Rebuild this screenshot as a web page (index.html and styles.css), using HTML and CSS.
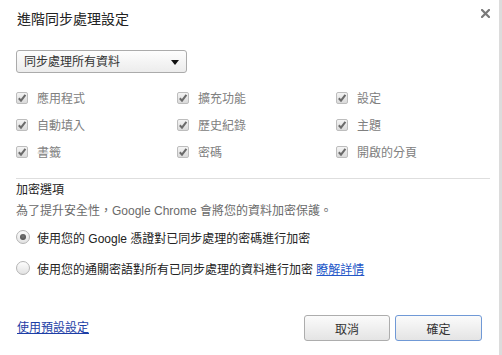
FILE: index.html
```html
<!DOCTYPE html>
<html lang="zh-Hant">
<head>
<meta charset="utf-8">
<title>進階同步處理設定</title>
<link rel="stylesheet" href="styles.css">
</head>
<body>
<div class="dialog">
  <div class="header">
    <div class="title">進階同步處理設定</div>
    <div class="close">
      <svg width="9" height="9" viewBox="0 0 9 9"><path d="M1 1 L8 8 M8 1 L1 8" stroke="#7a7a7a" stroke-width="2.2" stroke-linecap="square"/></svg>
    </div>
  </div>

  <div class="select">
    <span>同步處理所有資料</span>
    <span class="arrow"></span>
  </div>

  <div class="types">
    <div class="item"><span class="check"><svg width="10" height="10" viewBox="0 0 10 10"><path d="M1.8 5.2 L4 7.6 L8.4 1.8" fill="none" stroke="#6b6b6b" stroke-width="2"/></svg></span><span>應用程式</span></div>
    <div class="item"><span class="check"><svg width="10" height="10" viewBox="0 0 10 10"><path d="M1.8 5.2 L4 7.6 L8.4 1.8" fill="none" stroke="#6b6b6b" stroke-width="2"/></svg></span><span>擴充功能</span></div>
    <div class="item"><span class="check"><svg width="10" height="10" viewBox="0 0 10 10"><path d="M1.8 5.2 L4 7.6 L8.4 1.8" fill="none" stroke="#6b6b6b" stroke-width="2"/></svg></span><span>設定</span></div>
    <div class="item"><span class="check"><svg width="10" height="10" viewBox="0 0 10 10"><path d="M1.8 5.2 L4 7.6 L8.4 1.8" fill="none" stroke="#6b6b6b" stroke-width="2"/></svg></span><span>自動填入</span></div>
    <div class="item"><span class="check"><svg width="10" height="10" viewBox="0 0 10 10"><path d="M1.8 5.2 L4 7.6 L8.4 1.8" fill="none" stroke="#6b6b6b" stroke-width="2"/></svg></span><span>歷史紀錄</span></div>
    <div class="item"><span class="check"><svg width="10" height="10" viewBox="0 0 10 10"><path d="M1.8 5.2 L4 7.6 L8.4 1.8" fill="none" stroke="#6b6b6b" stroke-width="2"/></svg></span><span>主題</span></div>
    <div class="item"><span class="check"><svg width="10" height="10" viewBox="0 0 10 10"><path d="M1.8 5.2 L4 7.6 L8.4 1.8" fill="none" stroke="#6b6b6b" stroke-width="2"/></svg></span><span>書籤</span></div>
    <div class="item"><span class="check"><svg width="10" height="10" viewBox="0 0 10 10"><path d="M1.8 5.2 L4 7.6 L8.4 1.8" fill="none" stroke="#6b6b6b" stroke-width="2"/></svg></span><span>密碼</span></div>
    <div class="item"><span class="check"><svg width="10" height="10" viewBox="0 0 10 10"><path d="M1.8 5.2 L4 7.6 L8.4 1.8" fill="none" stroke="#6b6b6b" stroke-width="2"/></svg></span><span>開啟的分頁</span></div>
  </div>

  <div class="sep"></div>

  <div class="section-title">加密選項</div>
  <div class="desc">為了提升安全性，Google Chrome 會將您的資料加密保護。</div>
  <div class="radio-row"><span class="radio on"><span class="dot"></span></span><span>使用您的 Google 憑證對已同步處理的密碼進行加密</span></div>
  <div class="radio-row second"><span class="radio"></span><span>使用您的通關密語對所有已同步處理的資料進行加密 <a class="learn" href="#">瞭解詳情</a></span></div>

  <div class="footer">
    <a class="defaults" href="#">使用預設設定</a>
    <div class="buttons">
      <div class="btn">取消</div>
      <div class="btn primary">確定</div>
    </div>
  </div>
</div>
</body>
</html>
```

FILE: styles.css
```css
html, body {
  margin: 0;
  padding: 0;
  background: #fff;
}
body {
  font-family: "Liberation Sans", "Noto Sans CJK TC", sans-serif;
  font-size: 12px;
  color: #333;
}
.dialog {
  box-sizing: border-box;
  width: 502px;
  height: 355px;
  padding: 0 17px 0 16px;
  border-right: 3px solid #dcdcdc;
  display: flex;
  flex-direction: column;
}
.header {
  display: flex;
  justify-content: space-between;
  align-items: flex-start;
  padding-top: 10px;
  height: 18px;
}
.title {
  font-size: 14px;
  line-height: 18px;
  color: #222;
  padding-left: 1px;
}
.close {
  margin-top: -1px;
  margin-right: -8px;
  width: 9px;
  height: 9px;
  line-height: 0;
}
.select {
  margin-top: 22px;
  box-sizing: border-box;
  width: 171px;
  height: 23px;
  border: 1px solid #ababab;
  border-radius: 3px;
  background: linear-gradient(#fdfdfd, #ececec);
  display: flex;
  align-items: center;
  justify-content: space-between;
  padding: 0 7px 0 7px;
  color: #333;
  line-height: 16px;
}
.arrow {
  width: 0;
  height: 0;
  border-left: 4px solid transparent;
  border-right: 4px solid transparent;
  border-top: 5px solid #111;
  margin-top: 1px;
}
.types {
  margin-top: 11px;
  display: grid;
  grid-template-columns: 161px 159px auto;
  grid-auto-rows: 27px;
}
.item {
  display: flex;
  align-items: center;
  color: #808080;
}
.check {
  box-sizing: border-box;
  width: 12px;
  height: 12px;
  border: 1px solid #bdbdbd;
  border-radius: 2px;
  background: linear-gradient(#f4f4f4, #dadada);
  margin-right: 9px;
  display: flex;
  align-items: center;
  justify-content: center;
}
.check svg { display: block; }
.sep {
  margin-top: 13px;
  margin-right: -8px;
  border-top: 1px solid #dedede;
}
.section-title {
  margin-top: 2px;
  line-height: 18px;
  color: #222;
}
.desc {
  margin-top: 3px;
  line-height: 18px;
  color: #6a6a6a;
}
.radio-row {
  margin-top: 4px;
  height: 26px;
  display: flex;
  align-items: center;
  color: #222;
}
.radio-row.second { margin-top: 5px; }
.radio {
  box-sizing: border-box;
  width: 14px;
  height: 14px;
  border: 1px solid #b4b4b4;
  border-radius: 50%;
  background: linear-gradient(#fdfdfd, #e2e2e2);
  margin-right: 7px;
  display: flex;
  align-items: center;
  justify-content: center;
}
.dot {
  width: 6px;
  height: 6px;
  border-radius: 50%;
  background: radial-gradient(circle at 50% 40%, #777, #444);
}
a {
  text-decoration: underline;
}
.learn {
  color: #2457c8;
}
.footer {
  margin-top: auto;
  padding-bottom: 14px;
  display: flex;
  justify-content: space-between;
  align-items: center;
}
.defaults {
  color: #1d3ea6;
  padding-left: 1px;
  line-height: 16px;
}
.buttons {
  display: flex;
  gap: 5px;
}
.btn {
  box-sizing: border-box;
  width: 86px;
  height: 26px;
  border: 1px solid #adadad;
  border-radius: 3px;
  background: linear-gradient(#fbfbfb, #e4e4e4);
  display: flex;
  align-items: center;
  justify-content: center;
  color: #333;
}
.btn.primary {
  width: 87px;
  border-color: #7099d6;
}
```
